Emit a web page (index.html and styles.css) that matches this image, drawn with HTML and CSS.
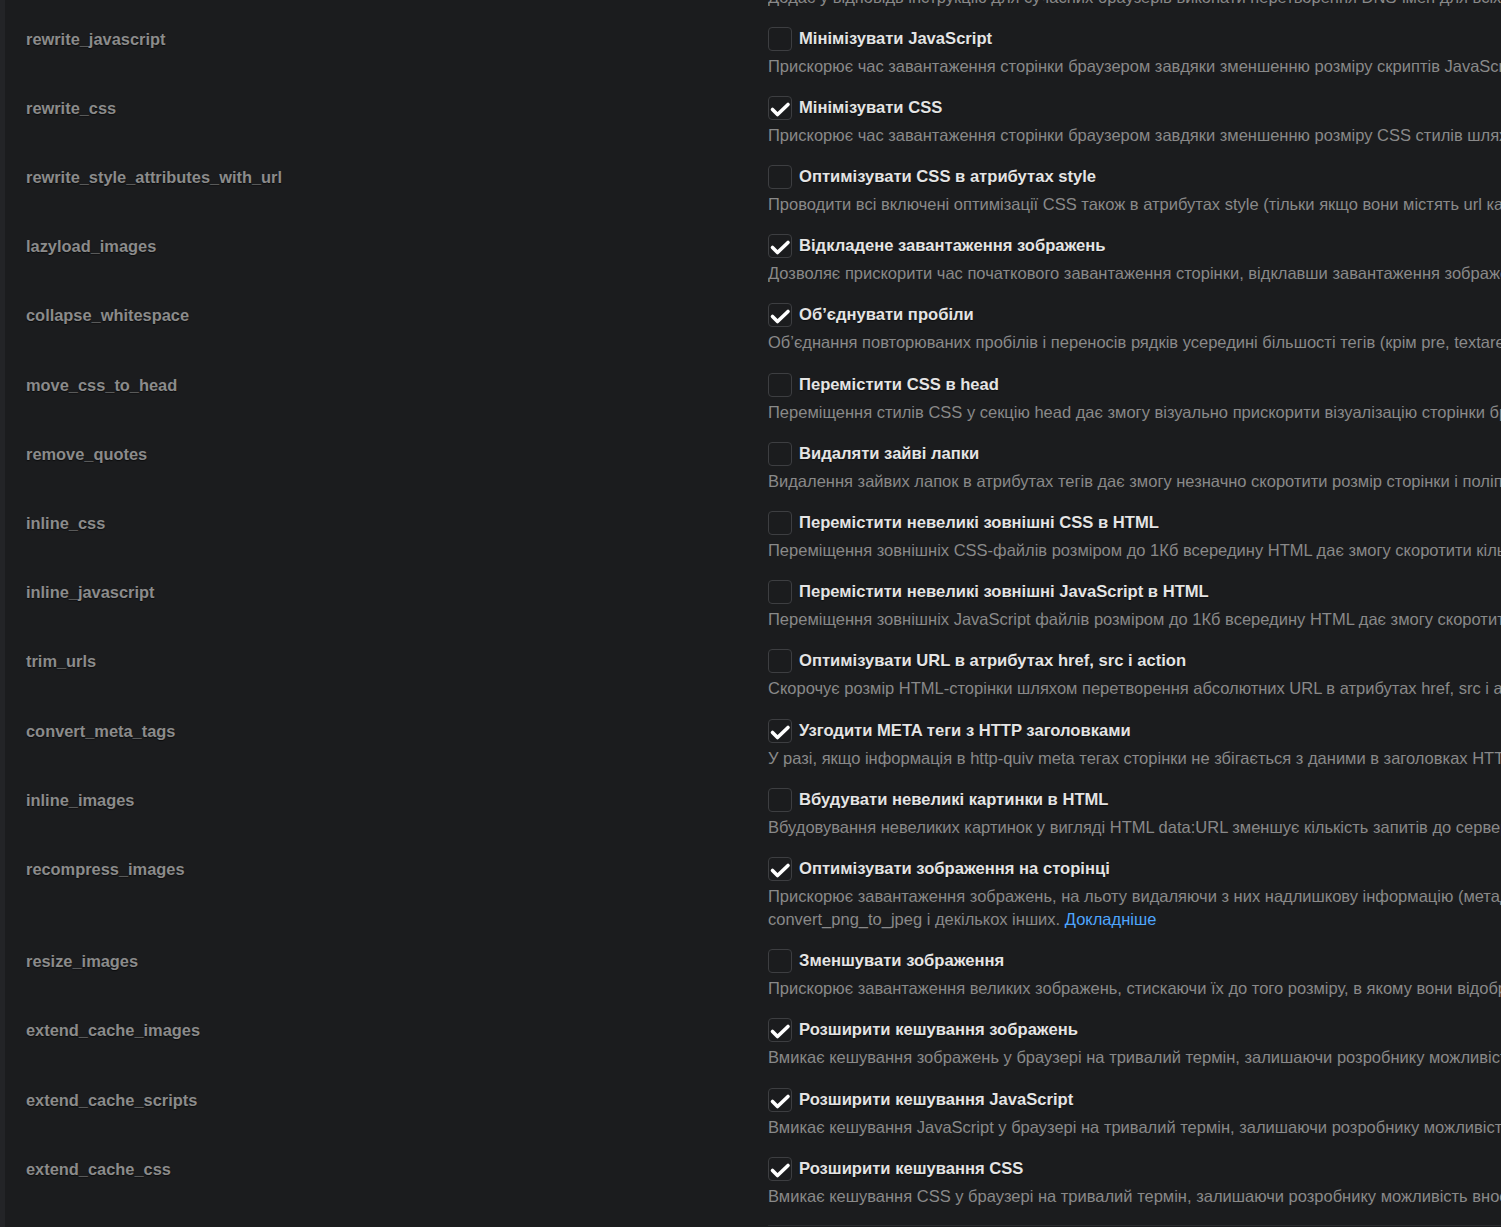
FILE: index.html
```html
<!DOCTYPE html>
<html lang="uk">
<head>
<meta charset="utf-8">
<title>PageSpeed</title>
<link rel="stylesheet" href="styles.css">
</head>
<body>
<div class="page">
  <div class="strip"></div>
  <div class="content">
    <div class="rows">
      <div class="row prev">
        <div class="key"></div>
        <div class="val">
          <p class="desc">Додає у відповідь інструкцію для сучасних браузерів виконати перетворення DNS-імен для всіх доменів на сторінці заздалегідь</p>
        </div>
      </div>

      <div class="row">
        <div class="key">rewrite_javascript</div>
        <div class="val">
          <label class="opt"><span class="cb"></span><span class="title">Мінімізувати JavaScript</span></label>
          <p class="desc">Прискорює час завантаження сторінки браузером завдяки зменшенню розміру скриптів JavaScript</p>
        </div>
      </div>

      <div class="row">
        <div class="key">rewrite_css</div>
        <div class="val">
          <label class="opt"><span class="cb on"><svg viewBox="1 1 22 22"><path d="M4.5 13.5l5 5 10.5-10"/></svg></span><span class="title">Мінімізувати CSS</span></label>
          <p class="desc">Прискорює час завантаження сторінки браузером завдяки зменшенню розміру CSS стилів шляхом</p>
        </div>
      </div>

      <div class="row">
        <div class="key">rewrite_style_attributes_with_url</div>
        <div class="val">
          <label class="opt"><span class="cb"></span><span class="title">Оптимізувати CSS в атрибутах style</span></label>
          <p class="desc">Проводити всі включені оптимізації CSS також в атрибутах style (тільки якщо вони містять url картинок)</p>
        </div>
      </div>

      <div class="row">
        <div class="key">lazyload_images</div>
        <div class="val">
          <label class="opt"><span class="cb on"><svg viewBox="1 1 22 22"><path d="M4.5 13.5l5 5 10.5-10"/></svg></span><span class="title">Відкладене завантаження зображень</span></label>
          <p class="desc">Дозволяє прискорити час початкового завантаження сторінки, відклавши завантаження зображень</p>
        </div>
      </div>

      <div class="row">
        <div class="key">collapse_whitespace</div>
        <div class="val">
          <label class="opt"><span class="cb on"><svg viewBox="1 1 22 22"><path d="M4.5 13.5l5 5 10.5-10"/></svg></span><span class="title">Об’єднувати пробіли</span></label>
          <p class="desc">Об’єднання повторюваних пробілів і переносів рядків усередині більшості тегів (крім pre, textarea</p>
        </div>
      </div>

      <div class="row">
        <div class="key">move_css_to_head</div>
        <div class="val">
          <label class="opt"><span class="cb"></span><span class="title">Перемістити CSS в head</span></label>
          <p class="desc">Переміщення стилів CSS у секцію head дає змогу візуально прискорити візуалізацію сторінки браузером</p>
        </div>
      </div>

      <div class="row">
        <div class="key">remove_quotes</div>
        <div class="val">
          <label class="opt"><span class="cb"></span><span class="title">Видаляти зайві лапки</span></label>
          <p class="desc">Видалення зайвих лапок в атрибутах тегів дає змогу незначно скоротити розмір сторінки і поліпшити</p>
        </div>
      </div>

      <div class="row">
        <div class="key">inline_css</div>
        <div class="val">
          <label class="opt"><span class="cb"></span><span class="title">Перемістити невеликі зовнішні CSS в HTML</span></label>
          <p class="desc">Переміщення зовнішніх CSS-файлів розміром до 1Кб всередину HTML дає змогу скоротити кількість</p>
        </div>
      </div>

      <div class="row">
        <div class="key">inline_javascript</div>
        <div class="val">
          <label class="opt"><span class="cb"></span><span class="title">Перемістити невеликі зовнішні JavaScript в HTML</span></label>
          <p class="desc">Переміщення зовнішніх JavaScript файлів розміром до 1Кб всередину HTML дає змогу скоротити</p>
        </div>
      </div>

      <div class="row">
        <div class="key">trim_urls</div>
        <div class="val">
          <label class="opt"><span class="cb"></span><span class="title">Оптимізувати URL в атрибутах href, src і action</span></label>
          <p class="desc">Скорочує розмір HTML-сторінки шляхом перетворення абсолютних URL в атрибутах href, src і action</p>
        </div>
      </div>

      <div class="row">
        <div class="key">convert_meta_tags</div>
        <div class="val">
          <label class="opt"><span class="cb on"><svg viewBox="1 1 22 22"><path d="M4.5 13.5l5 5 10.5-10"/></svg></span><span class="title">Узгодити META теги з HTTP заголовками</span></label>
          <p class="desc">У разі, якщо інформація в http-quiv meta тегах сторінки не збігається з даними в заголовках HTTP</p>
        </div>
      </div>

      <div class="row">
        <div class="key">inline_images</div>
        <div class="val">
          <label class="opt"><span class="cb"></span><span class="title">Вбудувати невеликі картинки в HTML</span></label>
          <p class="desc">Вбудовування невеликих картинок у вигляді HTML data:URL зменшує кількість запитів до сервера</p>
        </div>
      </div>

      <div class="row">
        <div class="key">recompress_images</div>
        <div class="val">
          <label class="opt"><span class="cb on"><svg viewBox="1 1 22 22"><path d="M4.5 13.5l5 5 10.5-10"/></svg></span><span class="title">Оптимізувати зображення на сторінці</span></label>
          <p class="desc">Прискорює завантаження зображень, на льоту видаляючи з них надлишкову інформацію (метадані)<br>convert_png_to_jpeg і декількох інших. <a href="#" class="link">Докладніше</a></p>
        </div>
      </div>

      <div class="row">
        <div class="key">resize_images</div>
        <div class="val">
          <label class="opt"><span class="cb"></span><span class="title">Зменшувати зображення</span></label>
          <p class="desc">Прискорює завантаження великих зображень, стискаючи їх до того розміру, в якому вони відображаються</p>
        </div>
      </div>

      <div class="row">
        <div class="key">extend_cache_images</div>
        <div class="val">
          <label class="opt"><span class="cb on"><svg viewBox="1 1 22 22"><path d="M4.5 13.5l5 5 10.5-10"/></svg></span><span class="title">Розширити кешування зображень</span></label>
          <p class="desc">Вмикає кешування зображень у браузері на тривалий термін, залишаючи розробнику можливість</p>
        </div>
      </div>

      <div class="row">
        <div class="key">extend_cache_scripts</div>
        <div class="val">
          <label class="opt"><span class="cb on"><svg viewBox="1 1 22 22"><path d="M4.5 13.5l5 5 10.5-10"/></svg></span><span class="title">Розширити кешування JavaScript</span></label>
          <p class="desc">Вмикає кешування JavaScript у браузері на тривалий термін, залишаючи розробнику можливість</p>
        </div>
      </div>

      <div class="row">
        <div class="key">extend_cache_css</div>
        <div class="val">
          <label class="opt"><span class="cb on"><svg viewBox="1 1 22 22"><path d="M4.5 13.5l5 5 10.5-10"/></svg></span><span class="title">Розширити кешування CSS</span></label>
          <p class="desc">Вмикає кешування CSS у браузері на тривалий термін, залишаючи розробнику можливість вносити</p>
        </div>
      </div>
    </div>
    <div class="rule"></div>
  </div>
</div>
</body>
</html>
```

FILE: styles.css
```css
html, body {
  margin: 0;
  padding: 0;
  background: #1b1c1e;
  overflow: hidden;
  height: 100%;
}

body {
  font-family: "Liberation Sans", Arial, sans-serif;
}

.page {
  display: flex;
  min-height: 100%;
}

.strip {
  flex: 0 0 5px;
  background: #232427;
}

.content {
  flex: 1 1 auto;
  min-width: 0;
  overflow: hidden;
}

.rows {
  margin-top: -51.6px;
  display: flex;
  flex-direction: column;
}

.row {
  display: flex;
  padding: 9.1px 0;
}

.key {
  flex: 0 0 742px;
  padding-left: 21px;
  font-size: 16.4px;
  font-weight: bold;
  color: #8b8b8b;
  line-height: 24px;
  text-shadow: 0 1px 1px rgba(0,0,0,0.6);
}

.val {
  flex: 1 1 auto;
  min-width: 0;
  overflow: hidden;
  display: flex;
  flex-direction: column;
  gap: 4px;
}

.prev .val {
  padding-top: 28px;
}

.opt {
  display: flex;
  align-items: center;
  gap: 7px;
  height: 24px;
}

.cb {
  box-sizing: border-box;
  flex: 0 0 24px;
  width: 24px;
  height: 24px;
  border: 1px solid #3d3e41;
  border-radius: 4px;
  background: #1b1c1e;
}

.cb svg {
  display: block;
  width: 22px;
  height: 22px;
}

.cb svg path {
  fill: none;
  stroke: #ffffff;
  stroke-width: 3.6;
  stroke-linecap: round;
  stroke-linejoin: round;
}

.title {
  font-size: 16.6px;
  font-weight: bold;
  color: #e4e4e4;
  white-space: nowrap;
  text-shadow: 0 1px 1px rgba(0,0,0,0.5);
}

.desc {
  margin: 0;
  font-size: 16.5px;
  line-height: 23px;
  color: #898989;
  white-space: nowrap;
}

.link {
  color: #4ea6ff;
  text-decoration: none;
}

.rule {
  margin-left: 763px;
  margin-top: 8px;
  height: 1px;
  background: #2a2b2e;
}
```
